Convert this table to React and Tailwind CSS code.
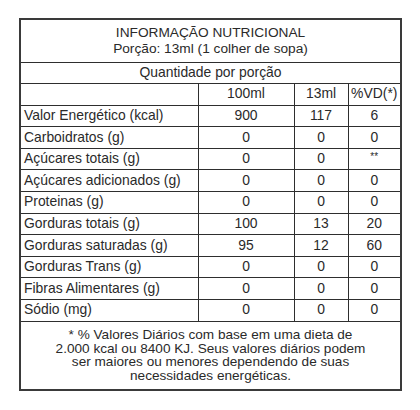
import React from "react";

const rows = [
  ["Valor Energético (kcal)", "900", "117", "6"],
  ["Carboidratos (g)", "0", "0", "0"],
  ["Açúcares totais (g)", "0", "0", "**"],
  ["Açúcares adicionados (g)", "0", "0", "0"],
  ["Proteinas (g)", "0", "0", "0"],
  ["Gorduras totais (g)", "100", "13", "20"],
  ["Gorduras saturadas (g)", "95", "12", "60"],
  ["Gorduras Trans (g)", "0", "0", "0"],
  ["Fibras Alimentares (g)", "0", "0", "0"],
  ["Sódio (mg)", "0", "0", "0"],
];

const cell = "border border-[#2e2e2e] h-[21.6px] p-0 leading-none";

export default function App() {
  return (
    <div className="w-[420px] h-[410px] bg-white pt-[18px] pl-[19px]">
      <table
        className="w-[381px] table-fixed border-collapse border-2 border-[#3a3a3a] text-[13.9px] text-[#2a2a2a]"
        style={{ fontFamily: '"Liberation Sans", Arial, sans-serif' }}
      >
        <colgroup>
          <col className="w-[178px]" />
          <col className="w-[96px]" />
          <col className="w-[54px]" />
          <col className="w-[53px]" />
        </colgroup>
        <tbody>
          <tr>
            <td colSpan={4} className={`${cell} h-[43px] text-center text-[13.7px]`}>
              <div className="leading-[16px]">INFORMAÇÃO NUTRICIONAL</div>
              <div className="leading-[16px]">Porção: 13ml (1 colher de sopa)</div>
            </td>
          </tr>
          <tr>
            <td colSpan={4} className={`${cell} text-center`}>
              Quantidade por porção
            </td>
          </tr>
          <tr>
            <td className={cell}></td>
            <td className={`${cell} text-center`}>100ml</td>
            <td className={`${cell} text-center`}>13ml</td>
            <td className={`${cell} text-center`}>%VD(*)</td>
          </tr>
          {rows.map((r, i) => (
            <tr key={i}>
              <td className={`${cell} pl-[3px]`}>{r[0]}</td>
              <td className={`${cell} text-center`}>{r[1]}</td>
              <td className={`${cell} text-center`}>{r[2]}</td>
              <td className={`${cell} text-center`}>
                {r[3] === "**" ? <span className="text-[10px] align-top">**</span> : r[3]}
              </td>
            </tr>
          ))}
          <tr>
            <td colSpan={4} className={`${cell} h-[69px] text-center text-[13.6px] leading-[16.8px]`}>
              * % Valores Diários com base em uma dieta de
              <br />
              2.000 kcal ou 8400 KJ. Seus valores diários podem
              <br />
              ser maiores ou menores dependendo de suas
              <br />
              necessidades energéticas.
            </td>
          </tr>
        </tbody>
      </table>
    </div>
  );
}
